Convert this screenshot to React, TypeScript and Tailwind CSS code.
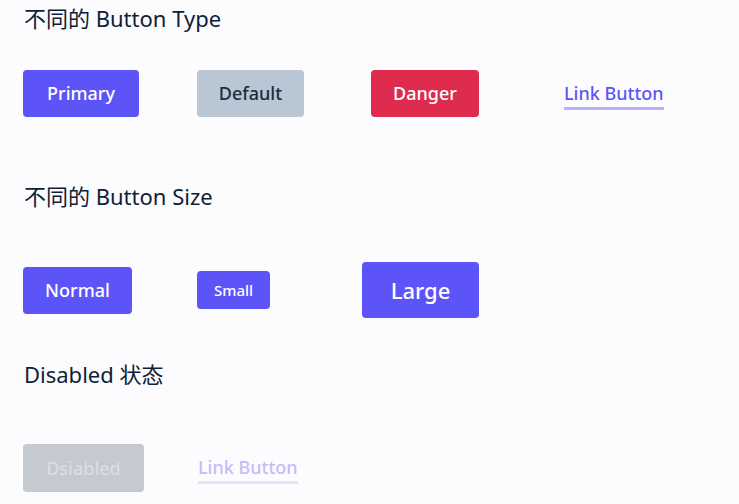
const FONT = "font-['Noto_Sans','Noto_Sans_CJK_SC',sans-serif]";

function Heading({ children }: { children: React.ReactNode }) {
  return <h2 className="text-[22px] font-normal leading-none text-[#0e1f36]">{children}</h2>;
}

export default function App() {
  return (
    <div className={`${FONT} h-[504px] w-[739px] overflow-hidden bg-[#fcfbfe] pl-[23px]`}>
      <div className="pt-[7px] pl-px">
        <Heading>不同的 Button Type</Heading>
      </div>
      <div className="mt-[41px] flex items-center">
        <button className="h-[47px] w-[116px] rounded-[4px] bg-[#5d54f7] text-[18px] font-medium text-white">
          Primary
        </button>
        <button className="ml-[58px] h-[47px] w-[107px] rounded-[4px] bg-[#b9c6d4] text-[18px] font-medium text-[#1b2b3e]">
          Default
        </button>
        <button className="ml-[67px] h-[47px] w-[108px] rounded-[4px] bg-[#de2b4e] text-[18px] font-medium text-white">
          Danger
        </button>
        <button className="ml-[85px] mt-[4px] border-b-[3px] border-[#b6b1fa] pb-[3px] text-[18px] font-medium leading-[22px] text-[#5d54f7]">
          Link Button
        </button>
      </div>

      <div className="mt-[68px] pl-px">
        <Heading>不同的 Button Size</Heading>
      </div>
      <div className="mt-[55px] flex items-center">
        <button className="h-[47px] w-[109px] rounded-[4px] bg-[#5d54f7] text-[18px] font-medium text-white">
          Normal
        </button>
        <button className="ml-[65px] h-[38px] w-[73px] rounded-[4px] bg-[#5d54f7] text-[15px] font-medium text-white">
          Small
        </button>
        <button className="ml-[92px] h-[56px] w-[117px] rounded-[4px] bg-[#5d54f7] text-[22px] font-medium text-white">
          Large
        </button>
      </div>

      <div className="mt-[45px] pl-px">
        <Heading>Disabled 状态</Heading>
      </div>
      <div className="mt-[59px] flex items-center">
        <button
          disabled
          className="h-[48px] w-[121px] cursor-not-allowed rounded-[4px] bg-[#c5c9d0] text-[18px] font-medium text-[#dadde3]"
        >
          Dsiabled
        </button>
        <button
          disabled
          className="ml-[54px] mt-[4px] cursor-not-allowed border-b-[3px] border-[#e6e1fc] pb-[3px] text-[18px] font-medium leading-[22px] text-[#c3bbfb]"
        >
          Link Button
        </button>
      </div>
    </div>
  );
}
